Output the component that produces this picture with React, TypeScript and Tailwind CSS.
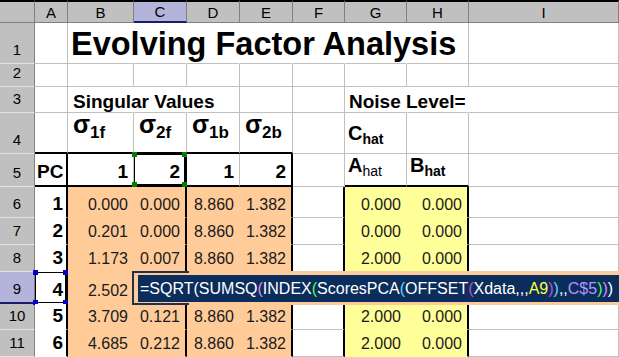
import type { ReactNode } from 'react'
import { twMerge } from 'tailwind-merge'

type Cell = { t?: ReactNode; c?: string }

const base =
  'relative flex items-end whitespace-nowrap bg-white border-r border-b border-[#c0c0c0] text-black'
const colHdr =
  'flex items-center justify-center bg-[#c0c0c0] border-r border-b border-[#808080] border-t-2 border-t-black text-[15px] leading-none text-black'
const rowHdr =
  'flex items-end justify-center pb-[6px] bg-[#c0c0c0] border-r border-b border-r-[#808080] border-b-[#e4e4e4] text-[15px] leading-none text-black'

const peach = 'bg-[#ffcc99] border-[#ffcc99]'
const yellow = 'bg-[#ffff99] border-[#ffff99]'
const num = 'justify-end pr-[5px] pb-[4px] text-[16px] leading-none text-[#1a1a1a]'
const bold = 'justify-end pr-[5px] pb-[4px] text-[19px] leading-none font-bold'
const thickR = 'border-r-2 border-r-black'
const thickB = 'border-b-2 border-b-black'
const noR = 'border-r-white'

function Sigma({ s }: { s: string }) {
  return (
    <span className="pl-[5px] pb-[11px] font-bold leading-none">
      <span className="text-[25px]">σ</span>
      <span className="align-[-5px] text-[17px]">{s}</span>
    </span>
  )
}

function Hat({ l, boldSub = true }: { l: string; boldSub?: boolean }) {
  return (
    <span className="pl-[3px] pb-[7px] leading-none">
      <span className="text-[20px] font-bold">{l}</span>
      <span className={`align-[-4px] text-[14px] ${boldSub ? 'font-bold' : ''}`}>hat</span>
    </span>
  )
}

// coloured reference border with its four corner handles
function RefBox({ color }: { color: string }) {
  const sq = `absolute w-[5px] h-[5px] ${color}`
  return (
    <div className="pointer-events-none absolute inset-0">
      <div className={`absolute inset-0 border ${color.replace('bg-', 'border-')}`} />
      <div className={`${sq} -left-[2px] -top-[2px]`} />
      <div className={`${sq} -right-[2px] -top-[2px]`} />
      <div className={`${sq} -left-[2px] -bottom-[2px]`} />
      <div className={`${sq} -right-[2px] -bottom-[2px]`} />
    </div>
  )
}

function dataRow(vals: (string | null)[], idx: string): Cell[] {
  const [b, c, d, e, g, h] = vals
  return [
    { t: idx, c: `${bold} pr-[3px] border-b-white ${thickR}` },
    { t: b, c: `${peach} ${num}` },
    { t: c, c: `${peach} ${num} ${thickR}` },
    { t: d, c: `${peach} ${num}` },
    { t: e, c: `${peach} ${num} ${thickR}` },
    { c: thickR },
    { t: g, c: `${yellow} ${num}` },
    { t: h, c: `${yellow} ${num} ${thickR}` },
    {},
  ]
}

const rows: Cell[][] = [
  [
    {},
    { t: 'Evolving Factor Analysis', c: `${noR} pl-[3px] pb-[3px] text-[32.5px] font-bold leading-none z-10` },
    { c: noR },
    { c: noR },
    { c: noR },
    { c: noR },
    { c: noR },
    {},
    {},
  ],
  [{}, {}, {}, {}, {}, {}, {}, {}, {}],
  [
    {},
    { t: 'Singular Values', c: `${noR} pl-[5px] pb-[1px] text-[19px] font-bold leading-none z-10` },
    { c: noR },
    {},
    {},
    {},
    { t: 'Noise Level=', c: `${noR} pl-[4px] pb-[1px] text-[19px] font-bold leading-none z-10` },
    { c: noR },
    {},
  ],
  [
    { c: thickB },
    { t: <Sigma s="1f" />, c: thickB },
    { t: <Sigma s="2f" />, c: thickB },
    { t: <Sigma s="1b" />, c: thickB },
    { t: <Sigma s="2b" />, c: thickB },
    {},
    { t: <Hat l="C" />, c: '' },
    {},
    {},
  ],
  [
    { t: 'PC', c: `pl-[2px] pb-[4px] text-[19px] leading-none font-bold ${thickR} ${thickB}` },
    { t: '1', c: `${bold} ${thickB}` },
    {
      t: (
        <>
          2
          <RefBox color="bg-[#008000]" />
        </>
      ),
      c: `${bold} ${thickR} ${thickB}`,
    },
    { t: '1', c: `${bold} ${thickB}` },
    { t: '2', c: `${bold} ${thickR} ${thickB}` },
    {},
    { t: <Hat l="A" boldSub={false} />, c: thickB },
    { t: <Hat l="B" />, c: thickB },
    {},
  ],
  dataRow(['0.000', '0.000', '8.860', '1.382', '0.000', '0.000'], '1'),
  dataRow(['0.201', '0.000', '8.860', '1.382', '0.000', '0.000'], '2'),
  dataRow(['1.173', '0.007', '8.860', '1.382', '2.000', '0.000'], '3'),
  dataRow(['2.502', null, null, null, null, null], '4'),
  dataRow(['3.709', '0.121', '8.860', '1.382', '2.000', '0.000'], '5'),
  dataRow(['4.685', '0.212', '8.860', '1.382', '2.000', '0.000'], '6'),
]

// row 9 active cell gets the blue reference box
rows[8][0] = {
  t: (
    <>
      4
      <RefBox color="bg-[#0000cc]" />
    </>
  ),
  c: `${bold} pr-[3px] border-b-white ${thickR}`,
}

const formula: [string, string][] = [
  ['=SQRT(', 'text-white'],
  ['SUMSQ', 'text-white'],
  ['(', 'text-[#d98cff]'],
  ['INDEX', 'text-white'],
  ['(', 'text-[#4cff4c]'],
  ['ScoresPCA', 'text-white'],
  ['(', 'text-[#5fd7ff]'],
  ['OFFSET', 'text-white'],
  ['(', 'text-[#c24fd0]'],
  ['Xdata,,,', 'text-white'],
  ['A9', 'text-[#ffff3c]'],
  [')', 'text-[#c24fd0]'],
  [')', 'text-[#5fd7ff]'],
  [',,', 'text-white'],
  ['C$5', 'text-[#b396ff]'],
  [')', 'text-[#4cff4c]'],
  [')', 'text-[#d98cff]'],
  [')', 'text-white'],
]

const letters = ['A', 'B', 'C', 'D', 'E', 'F', 'G', 'H', 'I']

export default function App() {
  return (
    <div className="relative w-[619px] h-[357px] overflow-hidden bg-white font-['Liberation_Sans',Arial,sans-serif]">
      <div className="grid grid-cols-[35px_33px_66px_53px_53px_53px_52px_62px_62px_1fr] grid-rows-[23px_41px_23px_26px_41px_33px_31px_27px_27px_32px_26px_27px]">
        {/* column headers */}
        <div className={colHdr} />
        {letters.map((l) => (
          <div
            key={l}
            className={twMerge(colHdr, l === 'C' && 'bg-[#b4b4da] border-b-2 border-b-[#1c1c6c]')}
          >
            {l}
          </div>
        ))}

        {rows.map((row, r) => (
          <div key={r} className="contents">
            <div
              className={twMerge(
                rowHdr,
                r === 8 && 'bg-[#b4b4da] border-b-2 border-b-[#1c1c6c]'
              )}
            >
              {r + 1}
            </div>
            {row.map((cell, c) => (
              <div key={c} className={twMerge(base, cell.c)}>
                {cell.t}
              </div>
            ))}
          </div>
        ))}
      </div>

      {/* in-cell formula editor over row 9 */}
      <div className="absolute left-[132px] top-[271px] right-0 h-[34px] flex bg-[#fdca9c] pl-[4px] pt-[4px] pb-[3px] border-l-2 border-l-[#22304c]">
        <div className="absolute -left-[2px] top-0 w-[57px] h-full border-y-2 border-[#22304c]" />
        <div className="flex-1 flex items-center bg-[#0b2d5c] pl-[2px] text-[16px] leading-none whitespace-nowrap">
          {formula.map(([s, cls], i) => (
            <span key={i} className={cls}>
              {s}
            </span>
          ))}
        </div>
      </div>
    </div>
  )
}
